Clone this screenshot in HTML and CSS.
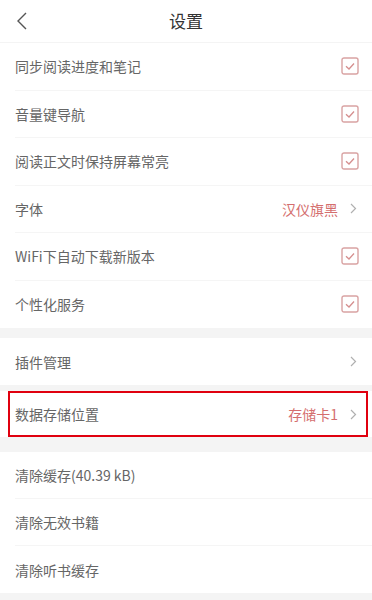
FILE: index.html
```html
<!DOCTYPE html>
<html lang="zh">
<head>
<meta charset="utf-8">
<link rel="stylesheet" href="styles.css">
</head>
<body>
<div class="page">
  <header class="header">
    <svg class="back" width="12" height="18" viewBox="0 0 12 18"><path d="M10 1 L2 9 L10 17" fill="none" stroke="#555" stroke-width="1.4"/></svg>
    <div class="title">设置</div>
  </header>
  <section class="group">
    <div class="row"><span class="label">同步阅读进度和笔记</span><span class="check"><svg width="18" height="18" viewBox="0 0 18 18"><rect x="1" y="1" width="16" height="16" rx="2" fill="none" stroke="#d9a3a3" stroke-width="1.4"/><path d="M5 9.3 L8 12 L13 6.5" fill="none" stroke="#d58e8e" stroke-width="1.3"/></svg></span></div>
    <div class="row"><span class="label">音量键导航</span><span class="check"><svg width="18" height="18" viewBox="0 0 18 18"><rect x="1" y="1" width="16" height="16" rx="2" fill="none" stroke="#d9a3a3" stroke-width="1.4"/><path d="M5 9.3 L8 12 L13 6.5" fill="none" stroke="#d58e8e" stroke-width="1.3"/></svg></span></div>
    <div class="row"><span class="label">阅读正文时保持屏幕常亮</span><span class="check"><svg width="18" height="18" viewBox="0 0 18 18"><rect x="1" y="1" width="16" height="16" rx="2" fill="none" stroke="#d9a3a3" stroke-width="1.4"/><path d="M5 9.3 L8 12 L13 6.5" fill="none" stroke="#d58e8e" stroke-width="1.3"/></svg></span></div>
    <div class="row"><span class="label">字体</span><span class="value">汉仪旗黑</span><svg class="arrow" width="7" height="11" viewBox="0 0 7 11"><path d="M1 1 L5.5 5.5 L1 10" fill="none" stroke="#b0b0b0" stroke-width="1.2"/></svg></div>
    <div class="row"><span class="label">WiFi下自动下载新版本</span><span class="check"><svg width="18" height="18" viewBox="0 0 18 18"><rect x="1" y="1" width="16" height="16" rx="2" fill="none" stroke="#d9a3a3" stroke-width="1.4"/><path d="M5 9.3 L8 12 L13 6.5" fill="none" stroke="#d58e8e" stroke-width="1.3"/></svg></span></div>
    <div class="row last"><span class="label">个性化服务</span><span class="check"><svg width="18" height="18" viewBox="0 0 18 18"><rect x="1" y="1" width="16" height="16" rx="2" fill="none" stroke="#d9a3a3" stroke-width="1.4"/><path d="M5 9.3 L8 12 L13 6.5" fill="none" stroke="#d58e8e" stroke-width="1.3"/></svg></span></div>
  </section>
  <section class="group gap10">
    <div class="row last h47"><span class="label">插件管理</span><svg class="arrow" width="7" height="11" viewBox="0 0 7 11"><path d="M1 1 L5.5 5.5 L1 10" fill="none" stroke="#b0b0b0" stroke-width="1.2"/></svg></div>
  </section>
  <section class="group gap6">
    <div class="boxrow">
      <div class="box"><span class="label">数据存储位置</span><span class="value">存储卡1</span><svg class="arrow" width="7" height="11" viewBox="0 0 7 11"><path d="M1 1 L5.5 5.5 L1 10" fill="none" stroke="#b0b0b0" stroke-width="1.2"/></svg></div>
    </div>
  </section>
  <section class="group gap15">
    <div class="row h47"><span class="label">清除缓存(40.39 kB)</span></div>
    <div class="row h47"><span class="label">清除无效书籍</span></div>
    <div class="row last h47"><span class="label">清除听书缓存</span></div>
  </section>
</div>
</body>
</html>
```
FILE: styles.css
```css
* { box-sizing: border-box; }
html, body { margin: 0; padding: 0; }
body {
  background: #f4f4f4;
  font-family: "Noto Sans CJK SC", "Noto Sans", sans-serif;
  width: 372px;
  height: 600px;
  overflow: hidden;
}
.page { display: flex; flex-direction: column; }
.header {
  height: 43px;
  background: #fff;
  border-bottom: 1px solid #f4f4f4;
  display: flex;
  align-items: center;
  justify-content: center;
  position: relative;
}
.back { position: absolute; left: 16px; top: 12px; }
.title { font-size: 17px; color: #333; line-height: 1; margin-top: -2px; }
.group { background: #fff; display: flex; flex-direction: column; }
.gap10 { margin-top: 10px; }
.gap6 { margin-top: 6px; }
.gap15 { margin-top: 15px; }
.row {
  height: 47.5px;
  margin-left: 15px;
  padding-right: 14px;
  display: flex;
  align-items: center;
  border-bottom: 1px solid #f5f5f5;
}
.row.h47 { height: 47px; }
.row.last { border-bottom: none; }
.label { font-size: 14px; color: #666; flex: 1; line-height: 1; }
.value { font-size: 14px; color: #d46e6e; line-height: 1; margin-right: 12px; }
.check { display: flex; margin-right: -1px; }
.arrow { display: block; margin-right: 1px; }
.boxrow { height: 46px; padding: 0 4px 0 8px; display: flex; }
.box {
  flex: 1;
  border: 2px solid #e0000f;
  display: flex;
  align-items: center;
  padding: 0 8px 0 5px;
}
```
